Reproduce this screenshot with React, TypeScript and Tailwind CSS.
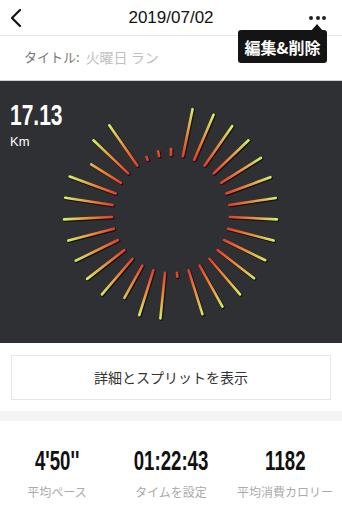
import React from "react";

const CX = 171;
const CY = 133;
const R_IN = 59;
const outer = [65, 107, 108, 107, 107, 106, 106, 106, 106, 106, 105, 105, 106, 106, 105, 63, 105, 106, 96, 106, 106, 106, 106, 107, 107, 108, 94, 107, 108, 62, 64];

function pt(deg: number, r: number) {
  const a = (deg * Math.PI) / 180;
  return { x: CX + r * Math.sin(a), y: CY - r * Math.cos(a) };
}

function Chart() {
  return (
    <svg width="342" height="262" viewBox="0 0 342 262" className="block">
      <defs>
        {outer.map((_, k) => {
          const deg = (k * 360) / 31;
          const a = pt(deg, R_IN);
          const b = pt(deg, 108);
          return (
            <linearGradient key={k} id={`g${k}`} gradientUnits="userSpaceOnUse" x1={a.x} y1={a.y} x2={b.x} y2={b.y}>
              <stop offset="0" stopColor="#e63d2a" />
              <stop offset="0.4" stopColor="#ee7f36" />
              <stop offset="1" stopColor="#d6f264" />
            </linearGradient>
          );
        })}
      </defs>
      {outer.map((ro, k) => {
        const deg = (k * 360) / 31;
        const a = pt(deg, R_IN);
        const b = pt(deg, ro);
        return (
          <g key={k}>
            <line x1={a.x + 0.8} y1={a.y + 0.8} x2={b.x + 0.8} y2={b.y + 0.8} stroke="#0b0b0c" strokeOpacity="0.75" strokeWidth="3.4" strokeLinecap="round" />
            <line x1={a.x} y1={a.y} x2={b.x} y2={b.y} stroke={`url(#g${k})`} strokeWidth="2.6" strokeLinecap="round" />
          </g>
        );
      })}
    </svg>
  );
}

const num = { fontFamily: '"Liberation Sans", Arial, sans-serif' };
const jp = { fontFamily: '"Noto Sans CJK JP", "Noto Sans", sans-serif' };

export default function App() {
  return (
    <div className="w-[342px] h-[512px] bg-white overflow-hidden relative" style={jp}>
      {/* header */}
      <div className="h-[36px] grid grid-cols-[48px_1fr_48px] items-center border-b border-[#e6e6e6]">
        <div className="pl-[9px] flex items-center">
          <svg width="14" height="20" viewBox="0 0 14 20">
            <path d="M11 2 L3 10 L11 18" fill="none" stroke="#111" strokeWidth="2.2" strokeLinecap="round" strokeLinejoin="round" />
          </svg>
        </div>
        <div className="text-center text-[17px] text-[#111]" style={num}>2019/07/02</div>
        <div className="flex justify-end pr-[16px] gap-[2.5px] items-center">
          <span className="w-[4px] h-[4px] rounded-full bg-[#222]" />
          <span className="w-[4px] h-[4px] rounded-full bg-[#222]" />
          <span className="w-[4px] h-[4px] rounded-full bg-[#222]" />
        </div>
      </div>

      {/* tooltip */}
      <div className="absolute left-[238px] top-[30px] w-[89px] h-[33px] bg-[#141414] rounded-[3px] flex items-center justify-center text-white text-[16px] font-bold">
        編集&amp;削除
        <span className="absolute -top-[6px] right-[4px] w-0 h-0 border-l-[6px] border-r-[6px] border-b-[7px] border-l-transparent border-r-transparent border-b-[#141414]" />
      </div>

      {/* title row */}
      <div className="h-[44px] flex items-center pl-[24px] pb-[2px] gap-[6px]">
        <span className="text-[13px] text-[#777]">タイトル:</span>
        <span className="text-[14px] text-[#c0c0c0]">火曜日 ラン</span>
      </div>

      {/* dark panel */}
      <div className="relative h-[263px] bg-[#2e3034] border-t border-[#cfd0d2]">
        <Chart />
        <div className="absolute left-[10px] top-[19px] text-white leading-none">
          <div className="text-[30px] font-bold origin-left scale-x-[0.7]" style={num}>17.13</div>
          <div className="text-[13px] mt-[5px]" style={num}>Km</div>
        </div>
      </div>

      {/* button */}
      <div className="px-[11px] pt-[12px] pb-[11px]">
        <div className="h-[45px] border border-[#e6e6e6] flex items-center justify-center text-[14px] text-[#333]">
          詳細とスプリットを表示
        </div>
      </div>
      <div className="h-[10px] bg-[#f4f4f4]" />

      {/* stats */}
      <div className="grid grid-cols-3 pt-[27px]">
        {[
          ["4'50''", "平均ペース"],
          ["01:22:43", "タイムを設定"],
          ["1182", "平均消費カロリー"],
        ].map(([v, l]) => (
          <div key={l} className="flex flex-col items-center">
            <div className="text-[27px] font-bold leading-none text-[#111] scale-x-[0.69]" style={num}>{v}</div>
            <div className="text-[12px] text-[#aaa] mt-[8px]">{l}</div>
          </div>
        ))}
      </div>
    </div>
  );
}
